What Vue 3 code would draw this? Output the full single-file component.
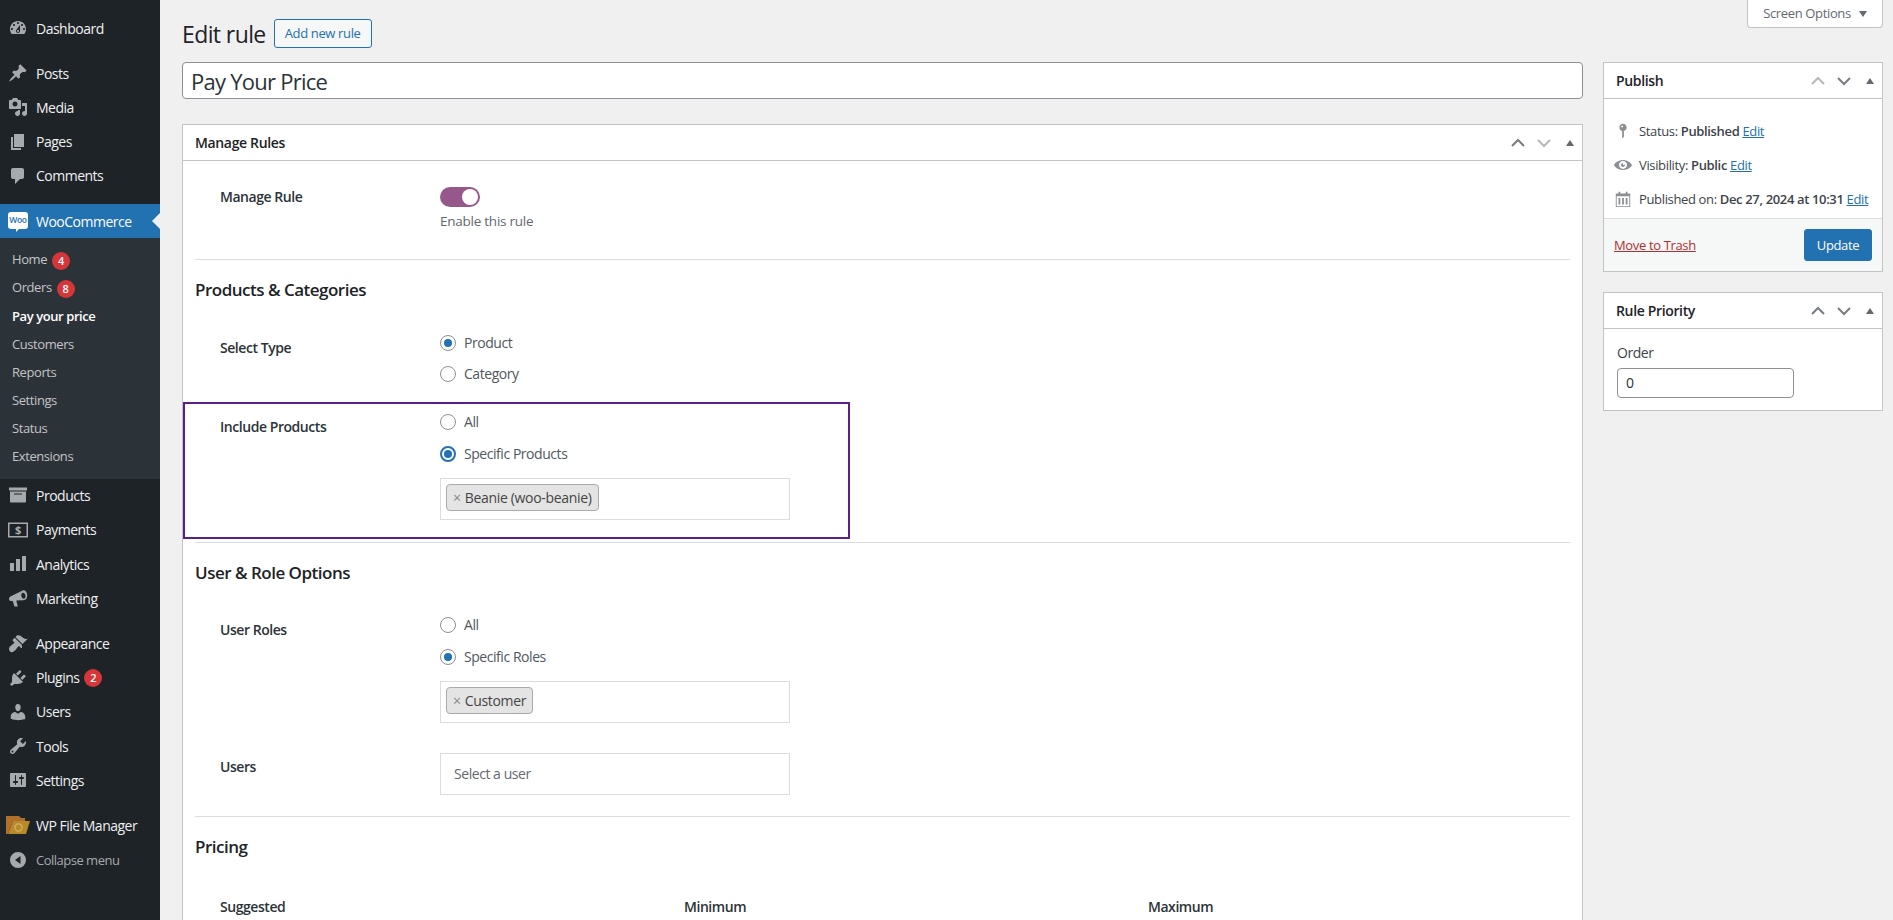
<script setup>
const d = {
  dashboard: 'M3.76 16h12.48c1.1-1.37 1.76-3.11 1.76-5 0-4.42-3.58-8-8-8s-8 3.58-8 8c0 1.89.66 3.63 1.76 5zM10 4c.55 0 1 .45 1 1s-.45 1-1 1-1-.45-1-1 .45-1 1-1zM6 6c.55 0 1 .45 1 1s-.45 1-1 1-1-.45-1-1 .45-1 1-1zm8 0c.55 0 1 .45 1 1s-.45 1-1 1-1-.45-1-1 .45-1 1-1zm-5.37 5.55L12 7v6c0 1.1-.9 2-2 2s-2-.9-2-2c0-.57.24-1.08.63-1.45zM4 10c.55 0 1 .45 1 1s-.45 1-1 1-1-.45-1-1 .45-1 1-1zm12 0c.55 0 1 .45 1 1s-.45 1-1 1-1-.45-1-1 .45-1 1-1zm-5 3c0-.55-.45-1-1-1s-1 .45-1 1 .45 1 1 1 1-.45 1-1z',
  pin: 'M10.44 3.02l1.82-1.82 6.36 6.35-1.83 1.82c-1.05-.68-2.48-.57-3.41.36l-.75.75c-.92.93-1.04 2.35-.35 3.41l-1.83 1.82-2.41-2.41-2.8 2.79c-.42.42-3.38 2.71-3.8 2.29s1.86-3.39 2.28-3.81l2.79-2.79L4.1 9.36l1.83-1.82c1.05.69 2.48.57 3.4-.36l.75-.75c.93-.92 1.05-2.35.36-3.41z',
  media: 'M13 11V4c0-.55-.45-1-1-1h-1.67L9 1H5L3.67 3H2c-.55 0-1 .45-1 1v7c0 .55.45 1 1 1h10c.55 0 1-.45 1-1zM7 4.5c1.38 0 2.5 1.12 2.5 2.5S8.38 9.5 7 9.5 4.5 8.38 4.5 7 5.62 4.5 7 4.5zM14 6h5v10.5c0 1.38-1.12 2.5-2.5 2.5S14 17.88 14 16.5s1.12-2.5 2.5-2.5c.17 0 .34.02.5.05V9h-3V6zm-4 8.05V13h2v3.5c0 1.38-1.12 2.5-2.5 2.5S7 17.88 7 16.5 8.12 14 9.5 14c.17 0 .34.02.5.05z',
  pages: 'M6 15V2h10v13H6zm-1 1h8v2H3V5h2v11z',
  comments: 'M5 2h9c1.1 0 2 .9 2 2v7c0 1.1-.9 2-2 2h-2l-5 5v-5H5c-1.1 0-2-.9-2-2V4c0-1.1.9-2 2-2z',
  products: 'M19 1.5v3H1v-3h18zM2 5.5h16v10c0 .55-.45 1-1 1H3c-.55 0-1-.45-1-1v-10zm4 3h8v-1H6v1z',
  analytics: 'M18 17V2h-4v15h4zm-6 0V5H8v12h4zm-6 0V9H2v8h4z',
  marketing: 'M18.4 4.2c-.9-1.6-2.7-2.2-3.8-1.6L3.4 8C1.8 8.7 1 9.5 1 10.8c0 1.4 1 2.4 2.4 2.3l1.4-.2 1.6 5.6h3.4L8.3 12.6l6.9-.4c1.4.1 3.3-.9 3.8-3 .4-1.7.3-3.7-.6-5zm-2.3 6.4c-1.1.3-2.3-.8-2.7-2.4-.4-1.6.2-3.1 1.3-3.4 1.1-.3 2.3.8 2.7 2.4.4 1.6-.2 3.1-1.3 3.4z',
  appearance: 'M14.48 11.06L7.41 3.99l1.5-1.5c.5-.56 2.3-.47 3.51.32 1.21.8 1.43 1.28 2.91 2.1 1.18.64 2.45 1.26 4.45.85zm-.71.71L6.7 4.7 4.93 6.47c-.39.39-.39 1.02 0 1.41l1.06 1.06c.39.39.39 1.03 0 1.42-.6.6-1.43 1.11-2.21 1.69-.35.26-.7.53-1.01.84C1.43 13.23.1 16.44 2 18.5s4.7-.8 5.68-1.7c.31-.31.58-.66.84-1.01.58-.78 1.09-1.61 1.69-2.21.39-.39 1.02-.39 1.41 0l1.06 1.06c.39.39 1.03.39 1.42 0z',
  plugins: 'M13.11 4.36L9.87 7.6 8 5.73l3.24-3.24c.35-.34 1.05-.2 1.56.32.52.51.66 1.21.31 1.55zm-8 1.77l.91-1.12 9.01 9.01-1.19.84c-.71.71-2.63 1.16-3.82 1.16H6.14L4.9 17.26c-.59.59-1.54.59-2.12 0-.59-.58-.59-1.53 0-2.12l1.24-1.24v-3.88c0-1.13.4-3.19 1.09-3.89zm7.26 3.97l3.24-3.24c.34-.35 1.04-.21 1.55.31.52.51.66 1.21.31 1.55l-3.24 3.25z',
  users: 'M10 9.25c-2.27 0-2.73-3.44-2.73-3.44C7 4.02 7.82 2 9.97 2c2.16 0 2.98 2.02 2.71 3.81 0 0-.41 3.44-2.68 3.44zm0 2.57L12.72 10c2.39 0 4.52 2.33 4.52 4.53v2.49s-3.65 1.13-7.24 1.13c-3.65 0-7.24-1.13-7.24-1.13v-2.49c0-2.25 1.94-4.48 4.47-4.48z',
  tools: 'M16.68 9.77c-1.34 1.34-3.3 1.67-4.95.99l-5.41 6.52c-.99.99-2.59.99-3.58 0s-.99-2.59 0-3.57l6.52-5.42c-.68-1.65-.35-3.61.99-4.95 1.28-1.28 3.12-1.62 4.72-1.06l-2.89 2.89 2.82 2.82 2.86-2.87c.53 1.58.18 3.39-1.08 4.65zM3.81 16.21c.4.39 1.04.39 1.43 0 .4-.4.4-1.04 0-1.43-.39-.4-1.03-.4-1.43 0-.39.39-.39 1.03 0 1.43z',
  settings: 'M18 16V4c0-.55-.45-1-1-1H3c-.55 0-1 .45-1 1v12c0 .55.45 1 1 1h14c.55 0 1-.45 1-1zM8 11h1c.55 0 1 .45 1 1s-.45 1-1 1H8v1.5c0 .28-.22.5-.5.5s-.5-.22-.5-.5V13H6c-.55 0-1-.45-1-1s.45-1 1-1h1V5.5c0-.28.22-.5.5-.5s.5.22.5.5V11zm5-2h-1c-.55 0-1-.45-1-1s.45-1 1-1h1V5.5c0-.28.22-.5.5-.5s.5.22.5.5V7h1c.55 0 1 .45 1 1s-.45 1-1 1h-1v5.5c0 .28-.22.5-.5.5s-.5-.22-.5-.5V9z',
  status: 'M14 6c0 1.86-1.28 3.41-3 3.86V16c0 1-2 2-2 2V9.86c-1.72-.45-3-2-3-3.86 0-2.21 1.79-4 4-4s4 1.79 4 4zM8 5c0 .55.45 1 1 1s1-.45 1-1-.45-1-1-1-1 .45-1 1z',
  eye: 'M10 4.4C3.439 4.4 0 9.232 0 10c0 .766 3.439 5.6 10 5.6 6.56 0 10-4.834 10-5.6 0-.768-3.44-5.6-10-5.6zm0 9.907c-2.455 0-4.445-1.928-4.445-4.307S7.545 5.691 10 5.691s4.444 1.93 4.444 4.309-1.989 4.307-4.444 4.307zM10 10c-.407-.447.663-2.154 0-2.154-1.228 0-2.223.965-2.223 2.154s.995 2.154 2.223 2.154c1.227 0 2.223-.965 2.223-2.154 0-.547-1.877.379-2.223 0z',
  calendar: 'M15 4h3v15H2V4h3V2h2v2h6V2h2v2zM3 7v11h14V7H3zm2 2h2v7H5V9zm4 0h2v7H9V9zm4 0h2v7h-2V9z',
}

const mainGroup = [
  { label: 'Posts', icon: d.pin },
  { label: 'Media', icon: d.media },
  { label: 'Pages', icon: d.pages },
  { label: 'Comments', icon: d.comments },
]
const subItems = [
  { label: 'Home', badge: 4 },
  { label: 'Orders', badge: 8 },
  { label: 'Pay your price', current: true },
  { label: 'Customers' },
  { label: 'Reports' },
  { label: 'Settings' },
  { label: 'Status' },
  { label: 'Extensions' },
]
const lowerGroup = [
  { label: 'Plugins', icon: d.plugins, badge: 2 },
  { label: 'Users', icon: d.users },
  { label: 'Tools', icon: d.tools },
  { label: 'Settings', icon: d.settings },
]
</script>

<template>
  <div class="page">
    <aside class="sidebar">
      <ul class="menu">
        <li class="item">
          <svg class="ico" viewBox="0 0 20 20"><path :d="d.dashboard" /></svg>Dashboard
        </li>
      </ul>
      <ul class="menu">
        <li v-for="item in mainGroup" :key="item.label" class="item">
          <svg class="ico" viewBox="0 0 20 20"><path :d="item.icon" /></svg>{{ item.label }}
        </li>
      </ul>
      <ul class="menu woo-menu">
        <li class="item active">
          <span class="woo"><span class="woo-text">Woo</span></span>WooCommerce
          <span class="arrow"></span>
        </li>
      </ul>
      <ul class="submenu">
        <li v-for="s in subItems" :key="s.label" :class="{ current: s.current }">
          {{ s.label }}<span v-if="s.badge" class="badge">{{ s.badge }}</span>
        </li>
      </ul>
      <ul class="menu">
        <li class="item">
          <svg class="ico" viewBox="0 0 20 20"><path :d="d.products" /></svg>Products
        </li>
        <li class="item">
          <svg class="ico" viewBox="0 0 20 20">
            <rect x="0.75" y="3.25" width="18.5" height="13.5" fill="none" stroke="#a7aaad" stroke-width="1.5" />
            <text x="10" y="14.2" text-anchor="middle" font-size="11" font-weight="700" fill="#a7aaad" font-family="'Open Sans', sans-serif">$</text>
          </svg>Payments
        </li>
        <li class="item">
          <svg class="ico" viewBox="0 0 20 20"><path :d="d.analytics" /></svg>Analytics
        </li>
        <li class="item">
          <svg class="ico" viewBox="0 0 20 20"><path :d="d.marketing" /></svg>Marketing
        </li>
      </ul>
      <ul class="menu">
        <li class="item">
          <svg class="ico" viewBox="0 0 20 20"><path :d="d.appearance" /></svg>Appearance
        </li>
        <li v-for="item in lowerGroup" :key="item.label" class="item">
          <svg class="ico" viewBox="0 0 20 20"><path :d="item.icon" /></svg>{{ item.label }}
          <span v-if="item.badge" class="badge">{{ item.badge }}</span>
        </li>
      </ul>
      <ul class="menu">
        <li class="item">
          <svg class="ico folder" viewBox="0 0 24 20">
            <path d="M0 1h13l2 2h4v3H7L2 19H0z" fill="#b0702c" />
            <path d="M7 6h17l-4 13H2z" fill="#b98a2a" />
            <circle cx="12.5" cy="12.5" r="3.6" fill="none" stroke="#d6b36a" stroke-width="1.2" />
          </svg>WP File Manager
        </li>
        <li class="item collapse">
          <svg class="ico" viewBox="0 0 20 20">
            <path d="M10 18a8 8 0 1 1 0-16 8 8 0 0 1 0 16zm2.5-12L7 10l5.5 4V6z" />
          </svg>Collapse menu
        </li>
      </ul>
    </aside>

    <main class="content">
      <button class="screen-options">Screen Options <span class="caret"></span></button>
      <div class="title-row">
        <h1>Edit rule</h1>
        <a class="add-new">Add new rule</a>
      </div>

      <div class="columns">
        <div class="left">
          <div class="title-input">Pay Your Price</div>

          <section class="box manage">
            <header class="box-head">
              <h2>Manage Rules</h2>
              <div class="handles">
                <svg viewBox="0 0 16 10" class="chev"><path d="M2 8l6-6 6 6" /></svg>
                <svg viewBox="0 0 16 10" class="chev dim"><path d="M2 2l6 6 6-6" /></svg>
                <span class="tri"></span>
              </div>
            </header>
            <div class="box-body">
              <div class="row row-manage">
                <div class="label label-top">Manage Rule</div>
                <div>
                  <div class="toggle"><span class="knob"></span></div>
                  <p class="desc">Enable this rule</p>
                </div>
              </div>
              <hr class="rule rule-1" />

              <h3 class="section-title st-products">Products &amp; Categories</h3>
              <div class="row row-type">
                <div class="label">Select Type</div>
                <div class="radios gap-11">
                  <label class="radio"><span class="dot on"></span>Product</label>
                  <label class="radio"><span class="dot"></span>Category</label>
                </div>
              </div>
              <div class="row row-include">
                <div class="highlight"></div>
                <div class="label">Include Products</div>
                <div>
                  <div class="radios">
                    <label class="radio"><span class="dot"></span>All</label>
                    <label class="radio"><span class="dot on focus"></span>Specific Products</label>
                  </div>
                  <div class="select"><span class="tag"><i>×</i>Beanie (woo-beanie)</span></div>
                </div>
              </div>
              <hr class="rule rule-2" />

              <h3 class="section-title st-users">User &amp; Role Options</h3>
              <div class="row row-roles">
                <div class="label">User Roles</div>
                <div>
                  <div class="radios">
                    <label class="radio"><span class="dot"></span>All</label>
                    <label class="radio"><span class="dot on"></span>Specific Roles</label>
                  </div>
                  <div class="select"><span class="tag"><i>×</i>Customer</span></div>
                </div>
              </div>
              <div class="row row-users">
                <div class="label label-users">Users</div>
                <div class="select placeholder">Select a user</div>
              </div>
              <hr class="rule rule-3" />

              <h3 class="section-title st-pricing">Pricing</h3>
              <div class="price-row">
                <div class="label">Suggested</div>
                <div class="label">Minimum</div>
                <div class="label">Maximum</div>
              </div>
            </div>
          </section>
        </div>

        <div class="side">
          <section class="box publish">
            <header class="box-head">
              <h2>Publish</h2>
              <div class="handles">
                <svg viewBox="0 0 16 10" class="chev dim"><path d="M2 8l6-6 6 6" /></svg>
                <svg viewBox="0 0 16 10" class="chev"><path d="M2 2l6 6 6-6" /></svg>
                <span class="tri"></span>
              </div>
            </header>
            <div class="pub-list">
              <div class="pub-row">
                <svg class="pub-ico" viewBox="0 0 20 20"><path :d="d.status" /></svg>
                <span>Status: <b>Published</b> <a>Edit</a></span>
              </div>
              <div class="pub-row">
                <svg class="pub-ico" viewBox="0 0 20 20"><path :d="d.eye" /></svg>
                <span>Visibility: <b>Public</b> <a>Edit</a></span>
              </div>
              <div class="pub-row">
                <svg class="pub-ico" viewBox="0 0 20 20"><path :d="d.calendar" /></svg>
                <span>Published on: <b>Dec 27, 2024 at 10:31</b> <a>Edit</a></span>
              </div>
            </div>
            <footer class="pub-foot">
              <a class="trash">Move to Trash</a>
              <button class="update">Update</button>
            </footer>
          </section>

          <section class="box priority">
            <header class="box-head">
              <h2>Rule Priority</h2>
              <div class="handles">
                <svg viewBox="0 0 16 10" class="chev"><path d="M2 8l6-6 6 6" /></svg>
                <svg viewBox="0 0 16 10" class="chev"><path d="M2 2l6 6 6-6" /></svg>
                <span class="tri"></span>
              </div>
            </header>
            <div class="priority-body">
              <div class="order-label">Order</div>
              <div class="order-input">0</div>
            </div>
          </section>
        </div>
      </div>
    </main>
  </div>
</template>

<style>
html, body { margin: 0; background: #f0f0f1; }
</style>

<style scoped>
.page {
  display: flex;
  height: 100vh;
  overflow: hidden;
  background: #f0f0f1;
  color: #3c434a;
  font-family: "Open Sans", "Noto Sans", sans-serif;
  font-size: 13px;
  letter-spacing: -0.35px;
}
ul { list-style: none; margin: 0; padding: 0; }
a { color: #2271b1; text-decoration: underline; }

.sidebar { width: 160px; flex: none; background: #1d2327; color: #f0f0f1; font-size: 14px; letter-spacing: -0.5px; padding-top: 11px; }
.menu { margin-bottom: 11px; }
.item { position: relative; display: flex; align-items: center; height: 34.2px; white-space: nowrap; }
.ico { width: 20px; height: 20px; margin: 0 8px; flex: none; fill: #a7aaad; }
.ico.folder { width: 24px; margin: 0 6px; }
.active { background: #2271b1; color: #fff; }
.woo { width: 20px; height: 17px; margin: 0 8px; background: #fff; border-radius: 3px; display: flex; align-items: center; justify-content: center; flex: none; position: relative; top: -1px; }
.woo::after { content: ""; position: absolute; left: 8px; bottom: -3px; border: 2px solid transparent; border-top-color: #fff; border-left-color: #fff; }
.woo-text { font-size: 8.5px; font-weight: 600; color: #2271b1; letter-spacing: -0.3px; line-height: 1; }
.arrow { position: absolute; right: 0; top: 50%; margin-top: -8px; border: 8px solid transparent; border-right-color: #f0f0f1; }
.woo-menu { margin-bottom: 0; }
.submenu { background: #2c3338; padding: 7px 0 8px; font-size: 13px; letter-spacing: -0.42px; color: #c3c4c7; }
.submenu li { height: 28.2px; line-height: 28.2px; padding-left: 12px; white-space: nowrap; }
.submenu li.current { color: #fff; font-weight: 600; }
.badge { display: inline-block; width: 18px; height: 18px; margin-left: 5px; line-height: 18px; border-radius: 50%; background: #d63638; color: #fff; font-size: 11px; font-weight: 600; text-align: center; letter-spacing: 0; vertical-align: middle; }
.collapse { color: #a7aaad; font-size: 13px; }

.content { flex: 1; min-width: 0; position: relative; padding: 0 10px 0 22px; }
.screen-options { position: absolute; top: 0; right: 10px; width: 136px; height: 28px; padding: 0 0 2px; background: #fff; border: 1px solid #c3c4c7; border-top: none; border-radius: 0 0 4px 4px; color: #646970; font: inherit; letter-spacing: inherit; }
.caret { display: inline-block; margin-left: 5px; border: 4px solid transparent; border-top: 6px solid #646970; border-bottom: 0; vertical-align: 1px; }
.title-row { display: flex; align-items: center; height: 62px; padding-top: 4px; box-sizing: border-box; }
h1 { margin: 2px 0 0; font-size: 23px; font-weight: 400; letter-spacing: -0.6px; color: #1d2327; }
.add-new { margin-left: 8px; height: 29px; line-height: 27px; padding: 0 10px; box-sizing: border-box; border: 1px solid #2271b1; border-radius: 3px; background: #f6f7f7; text-decoration: none; }

.columns { display: flex; gap: 20px; }
.left { width: 1401px; flex: none; }
.side { width: 280px; flex: none; }
.title-input { height: 37px; box-sizing: border-box; padding: 0 8px; background: #fff; border: 1px solid #8c8f94; border-radius: 4px; font-size: 22px; line-height: 37px; letter-spacing: -0.75px; color: #2c3338; }

.box { background: #fff; border: 1px solid #c3c4c7; box-sizing: border-box; }
.manage { margin-top: 25px; height: 1000px; }
.box-head { display: flex; align-items: center; justify-content: space-between; height: 36px; border-bottom: 1px solid #c3c4c7; box-sizing: border-box; padding: 0 8px 0 12px; }
.box-head h2 { margin: 0; font-size: 14px; font-weight: 600; color: #1d2327; }
.handles { display: flex; align-items: center; gap: 10px; }
.chev { width: 16px; height: 10px; fill: none; stroke: #787c82; stroke-width: 2; }
.chev.dim { stroke: #b5b8bc; }
.tri { width: 0; height: 0; margin-left: 4px; border: 4px solid transparent; border-bottom: 6px solid #646970; border-top: 0; }

.box-body { padding: 0 12px; }
.row { position: relative; display: grid; grid-template-columns: 220px 1fr; padding-left: 25px; }
.label { padding-top: 5px; line-height: 20px; font-weight: 600; font-size: 14px; letter-spacing: -0.45px; color: #2c3338; }
.price-row .label { padding-top: 0; }
.label-top { padding-top: 0; }
.label-users { padding-top: 4px; }
.row-manage { margin-top: 26px; }
.toggle { width: 40px; height: 20px; box-sizing: border-box; padding: 2px 2px 2px 22px; border-radius: 10px; background: #96588a; }
.knob { display: block; width: 16px; height: 16px; border-radius: 50%; background: #fff; }
.desc { margin: 5px 0 0; line-height: 18px; color: #646970; font-size: 13.5px; letter-spacing: -0.25px; }
.rule { margin: 0; border: 0; height: 1px; background: #dcdcde; }
.rule-1 { margin-top: 29px; }
.rule-2 { margin-top: 22px; }
.rule-3 { margin-top: 21px; }
.section-title { margin: 0; line-height: 22px; font-size: 17px; font-weight: 600; letter-spacing: -0.5px; color: #1d2327; }
.st-products { margin-top: 19px; }
.st-users { margin-top: 19px; }
.st-pricing { margin-top: 19px; }
.row-type { margin-top: 32px; }
.row-include { margin-top: 28px; }
.row-roles { margin-top: 31px; }
.row-users { margin-top: 30px; }
.radios { display: flex; flex-direction: column; gap: 12px; }
.radios.gap-11 { gap: 11px; }
.radio { display: flex; align-items: center; height: 20px; line-height: 20px; font-size: 14px; letter-spacing: -0.45px; color: #50575e; }
.dot { width: 16px; height: 16px; margin-right: 8px; box-sizing: border-box; border: 1px solid #8c8f94; border-radius: 50%; background: #fff; display: flex; align-items: center; justify-content: center; }
.dot.on::before { content: ""; width: 8px; height: 8px; border-radius: 50%; background: #2271b1; }
.dot.focus { border: 2px solid #2271b1; }
.select { width: 350px; height: 42px; margin-top: 14px; box-sizing: border-box; padding: 5px; border: 1px solid #dcdcde; background: #fff; }
.row-users .select { margin-top: 0; }
.placeholder { padding: 0 13px; line-height: 40px; font-size: 14px; letter-spacing: -0.45px; color: #646970; }
.tag { display: inline-flex; align-items: center; height: 27px; box-sizing: border-box; padding: 0 6px; border: 1px solid #aaa; border-radius: 4px; background: #e4e4e4; font-size: 14px; letter-spacing: -0.32px; color: #444; }
.tag i { margin-right: 4px; font-style: normal; color: #888; }
.highlight { position: absolute; left: -12px; top: -10px; width: 667px; height: 137px; box-sizing: border-box; border: 2px solid #5b1f87; pointer-events: none; }
.price-row { display: grid; grid-template-columns: repeat(3, 464px); margin-top: 39px; padding-left: 25px; }

.publish { height: 210px; }
.pub-list { padding-top: 15px; }
.pub-row { display: flex; align-items: center; height: 34px; padding-left: 10px; }
.pub-ico { width: 18px; height: 18px; margin-right: 7px; flex: none; fill: #8c8f94; }
.pub-row b { font-weight: 600; }
.pub-foot { display: flex; align-items: center; justify-content: space-between; height: 53px; margin-top: 2px; padding: 0 10px; box-sizing: border-box; background: #f6f7f7; border-top: 1px solid #dcdcde; }
.trash { color: #b32d2e; }
.update { width: 68px; height: 32px; padding: 0; border: 1px solid #2271b1; border-radius: 3px; background: #2271b1; color: #fff; font: inherit; font-size: 13px; letter-spacing: inherit; }
.priority { margin-top: 20px; height: 119px; }
.priority-body { padding: 14px 13px; }
.order-label { line-height: 20px; font-size: 14px; letter-spacing: -0.45px; }
.order-input { width: 177px; height: 30px; margin-top: 5px; box-sizing: border-box; padding: 0 8px; border: 1px solid #8c8f94; border-radius: 4px; line-height: 28px; font-size: 14px; color: #2c3338; }
</style>
